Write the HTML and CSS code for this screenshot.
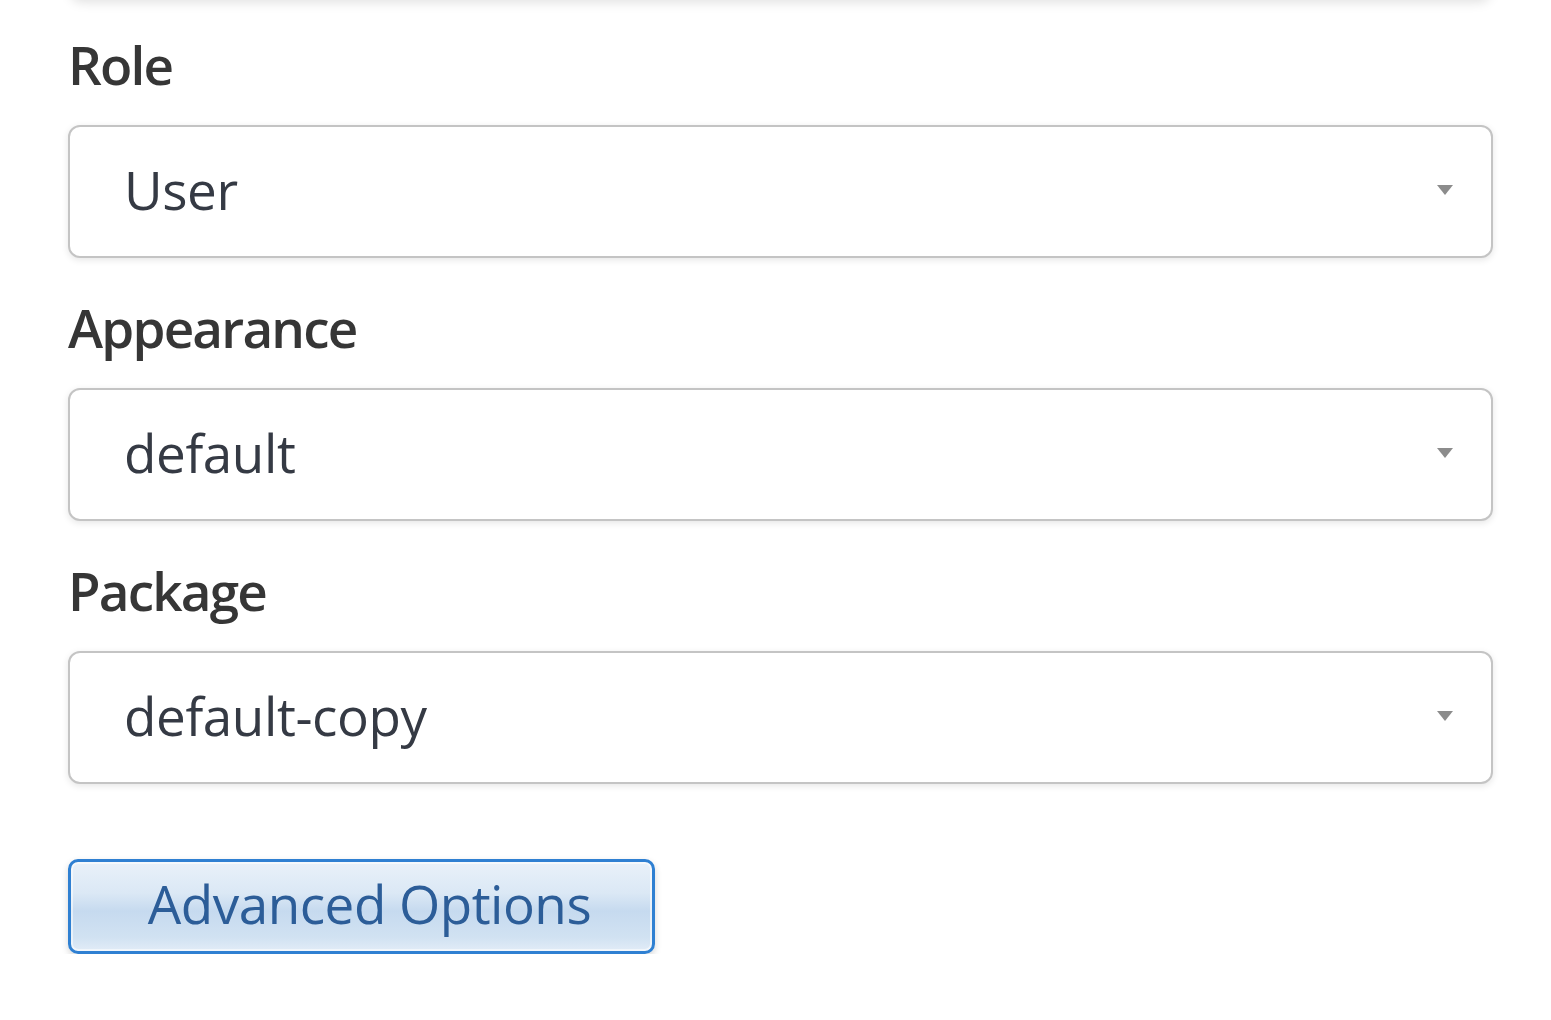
FILE: index.html
```html
<!DOCTYPE html>
<html lang="en">
<head>
<meta charset="utf-8">
<title>User settings</title>
<link rel="stylesheet" href="styles.css">
</head>
<body>
<div class="form">
  <div class="top-card"></div>

  <div class="field field-first">
    <div class="label">Role</div>
    <div class="select"><span class="value">User</span><span class="arrow"></span></div>
  </div>

  <div class="field">
    <div class="label">Appearance</div>
    <div class="select"><span class="value">default</span><span class="arrow"></span></div>
  </div>

  <div class="field">
    <div class="label">Package</div>
    <div class="select"><span class="value">default-copy</span><span class="arrow"></span></div>
  </div>

  <button class="btn" type="button">Advanced Options</button>
</div>
</body>
</html>
```

FILE: styles.css
```css
html, body {
  margin: 0;
  padding: 0;
  background: #ffffff;
  overflow: hidden;
}

body {
  font-family: "Open Sans", "Noto Sans", "DejaVu Sans", sans-serif;
  color: #333333;
}

.form {
  padding: 0 58px 0 68px;
}

.top-card {
  height: 40px;
  margin: -41px 2px 0 2px;
  background: #ffffff;
  border-radius: 12px;
  box-shadow: 0 3px 12px rgba(0, 0, 0, 0.13);
}

.field {
  margin-bottom: 37px;
}

.field-first {
  padding-top: 33px;
}

.label {
  font-size: 53px;
  font-weight: 600;
  line-height: 66px;
  letter-spacing: -1.8px;
  color: #363636;
  margin-bottom: 27px;
}

.select {
  box-sizing: border-box;
  height: 133px;
  border: 2px solid #c4c4c4;
  border-radius: 12px;
  background: #ffffff;
  box-shadow: 0 2px 7px rgba(0, 0, 0, 0.10);
  display: flex;
  align-items: center;
  justify-content: space-between;
  padding: 0 38px 0 54px;
}

.value {
  font-size: 53px;
  letter-spacing: -0.4px;
  color: #353a44;
  margin-bottom: 4px;
}

.arrow {
  width: 0;
  height: 0;
  border-left: 8px solid transparent;
  border-right: 8px solid transparent;
  border-top: 10px solid #8c8c8c;
  margin-bottom: 4px;
}

.btn {
  display: block;
  box-sizing: border-box;
  margin-top: 75px;
  width: 587px;
  height: 95px;
  padding: 0 0 6px 16px;
  border: 3px solid #2f80d2;
  border-radius: 10px;
  background: linear-gradient(to bottom, #e9f1f9 0%, #dbe8f5 35%, #c6daef 55%, #d1e2f2 85%, #e2ecf7 100%);
  box-shadow: inset 0 0 0 2px rgba(255, 255, 255, 0.55), 0 3px 7px rgba(0, 0, 0, 0.16);
  font-family: "Open Sans", "Noto Sans", "DejaVu Sans", sans-serif;
  font-size: 53px;
  letter-spacing: -0.5px;
  color: #2c5d98;
  text-align: center;
  cursor: pointer;
}
```
